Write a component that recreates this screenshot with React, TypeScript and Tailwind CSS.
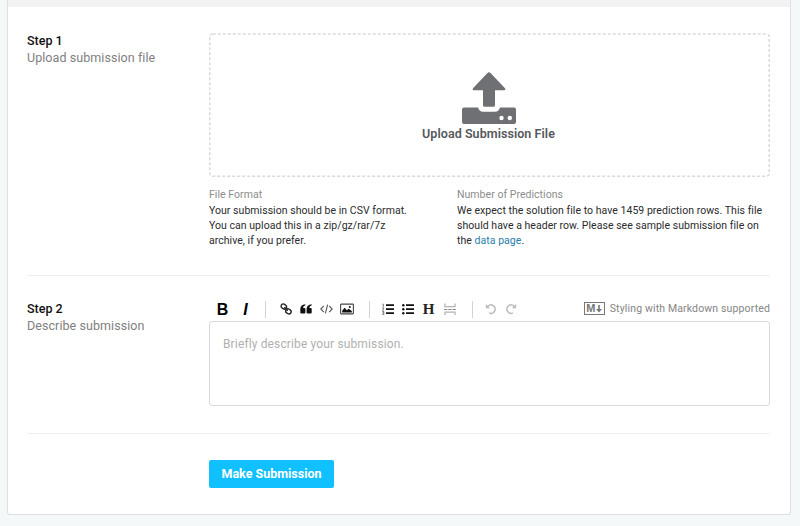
import React from "react";

function UploadIcon() {
  return (
    <svg width="54" height="53" viewBox="0 0 54 53" fill="#6f7074" className="block">
      <path d="M27 0.300q.8 0 1.500.8L43 16.300q1.200 1.600-.6 2H33v14.900q0 1.500-1.500 1.500h-9Q21 34.700 21 33.200V18.300h-9.400q-1.800-.4-.6-2L25.500 1.100Q26.200.3 27 .3Z" />
      <path
        fillRule="evenodd"
        d="M2 35.500h14q1.300 4.200 5 4.200h12q3.700 0 5-4.200H52q2 0 2 2V50q0 2-2 2H2q-2 0-2-2V37.500q0-2 2-2ZM39.500 43.800a2.200 2.200 0 1 0 0 4.400 2.200 2.200 0 0 0 0-4.400ZM47.800 43.800a2.200 2.200 0 1 0 0 4.400 2.200 2.200 0 0 0 0-4.400Z"
      />
    </svg>
  );
}

function LinkIcon() {
  return (
    <svg width="12" height="12" viewBox="0 0 12 12" fill="none" stroke="#222" strokeWidth="1.400">
      <rect x="1" y="1.300" width="5.600" height="4.400" rx="2.200" transform="rotate(35 3.800 3.500)" />
      <rect x="5.600" y="6.200" width="5.600" height="4.400" rx="2.200" transform="rotate(35 8.400 8.400)" />
      <path d="M4.300 4.200l3.400 3.600" />
    </svg>
  );
}

function QuoteIcon() {
  return (
    <svg width="12" height="12" viewBox="0 0 12 12" fill="#111">
      <path d="M5.300 1.200v1.300C4 2.700 3.200 3.600 3.100 5h1.300Q5.400 5 5.400 6v3.500q0 1.100-1.100 1.100H1.400Q.3 10.600.3 9.500V6C.3 3.300 2 1.300 5.300 1.200ZM11.600 1.200v1.300C10.300 2.700 9.500 3.600 9.400 5h1.300q1 0 1 1v3.500q0 1.100-1.100 1.100H7.700q-1.100 0-1.100-1.100V6c0-2.700 1.700-4.700 5-4.800Z" />
    </svg>
  );
}

function CodeIcon() {
  return (
    <svg width="13" height="12" viewBox="0 0 13 12" fill="none" stroke="#555" strokeWidth="1.100">
      <path d="M3.800 2.800.8 6l3 3.200M9.200 2.800l3 3.200-3 3.200M7.600 1.600 5.400 10.400" />
    </svg>
  );
}

function ImageIcon() {
  return (
    <svg width="14" height="12" viewBox="0 0 14 12">
      <rect x=".6" y="1.100" width="12.800" height="9.800" rx=".6" fill="none" stroke="#444" strokeWidth="1.100" />
      <path d="M2.200 9.400V7.700l2.400-3 2.200 2.500 1.900-1.500 3.100 2.200v1.500Z" fill="#111" />
      <circle cx="9.800" cy="4" r="1.100" fill="#222" />
    </svg>
  );
}

function OrderedIcon() {
  return (
    <svg width="12" height="12" viewBox="0 0 12 12">
      <path d="M4 2.200h8M4 6.200h8M4 10.200h8" stroke="#111" strokeWidth="1.700" />
      <path d="M.5 1.100h.8v2.700M.3 4.800h1.400v1.100L.5 7h1.400M.3 8.500h1.500v2.900H.3M.6 9.900h1.200" fill="none" stroke="#555" strokeWidth=".8" />
    </svg>
  );
}

function BulletIcon() {
  return (
    <svg width="12" height="12" viewBox="0 0 12 12" fill="#111">
      <path d="M4 2.200h8M4 6.200h8M4 10.200h8" stroke="#111" strokeWidth="1.700" />
      <circle cx="1.300" cy="2.200" r="1.200" />
      <circle cx="1.300" cy="6.200" r="1.200" />
      <circle cx="1.300" cy="10.200" r="1.200" />
    </svg>
  );
}

function RuleIcon() {
  return (
    <svg width="12" height="12" viewBox="0 0 12 12" fill="none" stroke="#b5b5b5" strokeWidth="1.300">
      <path d="M1 .5v3.200h10V.5M1 12V9.200h10V12" />
      <path d="M0 6.500h12" stroke="#888" strokeWidth="1.200" strokeDasharray="3.300 1" />
    </svg>
  );
}

function TurnIcon({ flip = false }: { flip?: boolean }) {
  return (
    <svg width="12" height="12" viewBox="0 0 12 12" className={flip ? "-scale-x-100" : ""}>
      <path d="M2.500 3.700A4.200 4.200 0 1 1 4.100 9.900" fill="none" stroke="#bdbdbd" strokeWidth="1.600" />
      <path d="M.8 1v4.300h4.300Z" fill="#bdbdbd" />
    </svg>
  );
}

function Slot({ className, children }: { className: string; children: React.ReactNode }) {
  return <button type="button" className={`flex h-4 shrink-0 items-center justify-center ${className}`}>{children}</button>;
}

function Separator({ className }: { className: string }) {
  return <span className={`h-[17px] w-px shrink-0 bg-[#d4d4d4] ${className}`} />;
}

function Toolbar() {
  return (
    <div className="flex h-[17px] items-center">
      <Slot className="ml-[7px] w-[13px] font-['Liberation_Sans',sans-serif] text-[16px] font-bold text-black">B</Slot>
      <Slot className="ml-[10px] w-[13px] font-['Liberation_Sans',sans-serif] text-[16px] font-bold text-black italic">I</Slot>
      <Separator className="ml-[13px]" />
      <Slot className="ml-[14px] w-3 pb-px"><LinkIcon /></Slot>
      <Slot className="ml-2 w-3 pb-px"><QuoteIcon /></Slot>
      <Slot className="ml-2 w-[13px] pb-px"><CodeIcon /></Slot>
      <Slot className="ml-[7px] w-[14px] pb-px"><ImageIcon /></Slot>
      <Separator className="ml-[15px]" />
      <Slot className="ml-3 w-3 pb-px"><OrderedIcon /></Slot>
      <Slot className="ml-2 w-3 pb-px"><BulletIcon /></Slot>
      <Slot className="ml-2 w-[13px] pb-px font-['Liberation_Serif',serif] text-[15px] font-bold text-[#222]">H</Slot>
      <Slot className="ml-[9px] w-3 pb-px"><RuleIcon /></Slot>
      <Separator className="ml-4" />
      <Slot className="ml-3 w-3 pb-px"><TurnIcon /></Slot>
      <Slot className="ml-2 w-3 pb-px"><TurnIcon flip /></Slot>
      <div className="ml-auto flex items-center gap-[5px] pb-[2px]">
        <span className="flex h-[13px] w-[21px] items-center justify-center gap-px border border-[#777] text-[#777]">
          <span className="font-['Liberation_Sans',sans-serif] text-[11px] leading-none font-bold">M</span>
          <svg width="6" height="8" viewBox="0 0 6 8" fill="#777"><path d="M2.200 0h1.600v4H6L3 7.500 0 4h2.200Z" /></svg>
        </span>
        <span className="text-[10.500px] leading-4 tracking-[0.140px] whitespace-nowrap text-[#858585]">Styling with Markdown supported</span>
      </div>
    </div>
  );
}

function StepLabel({ title, text }: { title: string; text: string }) {
  return (
    <div className="w-[182px] shrink-0 text-[12.500px] leading-[16.500px]">
      <h2 className="font-medium text-[#111]">{title}</h2>
      <p className="tracking-[0.070px] text-[#808080]">{text}</p>
    </div>
  );
}

export default function App() {
  return (
    <main className="h-[526px] overflow-hidden bg-[#f5f8f9] pr-[9px] pl-[7px] font-[Roboto,sans-serif]">
      <section className="h-[515px] rounded-b-[3px] border border-t-0 border-[#dedfe0] bg-white">
        <div className="h-[7px] bg-[#f2f2f2]" />
        <div className="pr-5 pl-[19px]">
          <div className="flex h-[268px] pt-[26px]">
            <StepLabel title="Step 1" text="Upload submission file" />
            <div className="min-w-0 flex-1">
              <div className="relative flex h-[144px] flex-col items-center pt-[39px] pr-[2px]">
                <svg className="absolute inset-0 h-full w-full" fill="none">
                  <rect x=".75" y="1" width="559.500" height="142.250" rx="3" stroke="#dadada" strokeWidth="1.500" strokeDasharray="3 2" />
                </svg>
                <UploadIcon />
                <span className="text-[12.500px] leading-[18px] font-semibold tracking-[0.060px] text-[#55585c]">Upload Submission File</span>
              </div>
              <div className="flex pt-[10px] text-[10.500px] leading-[15px] tracking-[0.040px] text-[#2a2b2d]">
                <div className="w-[248px] shrink-0">
                  <h3 className="pb-px text-[#8c8c8c]">File Format</h3>
                  <p>Your submission should be in CSV format.<br />You can upload this in a zip/gz/rar/7z<br />archive, if you prefer.</p>
                </div>
                <div className="whitespace-nowrap">
                  <h3 className="pb-px text-[#8c8c8c]">Number of Predictions</h3>
                  <p>We expect the solution file to have 1459 prediction rows. This file<br />should have a header row. Please see sample submission file on<br />the <a className="text-[#277cab]">data page</a>.</p>
                </div>
              </div>
            </div>
          </div>
          <div className="flex h-[158px] border-t border-[#efefef] pt-[25px]">
            <StepLabel title="Step 2" text="Describe submission" />
            <div className="min-w-0 flex-1">
              <Toolbar />
              <div className="mt-[3px] h-[85px] rounded-[3px] border border-[#d9d9d9] px-[13px] pt-[13px] text-[12px] leading-[18px] tracking-[0.140px] text-[#b0b0b0]">Briefly describe your submission.</div>
            </div>
          </div>
          <div className="border-t border-[#efefef] pt-[26px] pl-[182px]">
            <button type="button" className="h-7 w-[125px] rounded-[2px] bg-[#10c0ff] text-[12.500px] font-bold whitespace-nowrap text-white">Make Submission</button>
          </div>
        </div>
      </section>
    </main>
  );
}
